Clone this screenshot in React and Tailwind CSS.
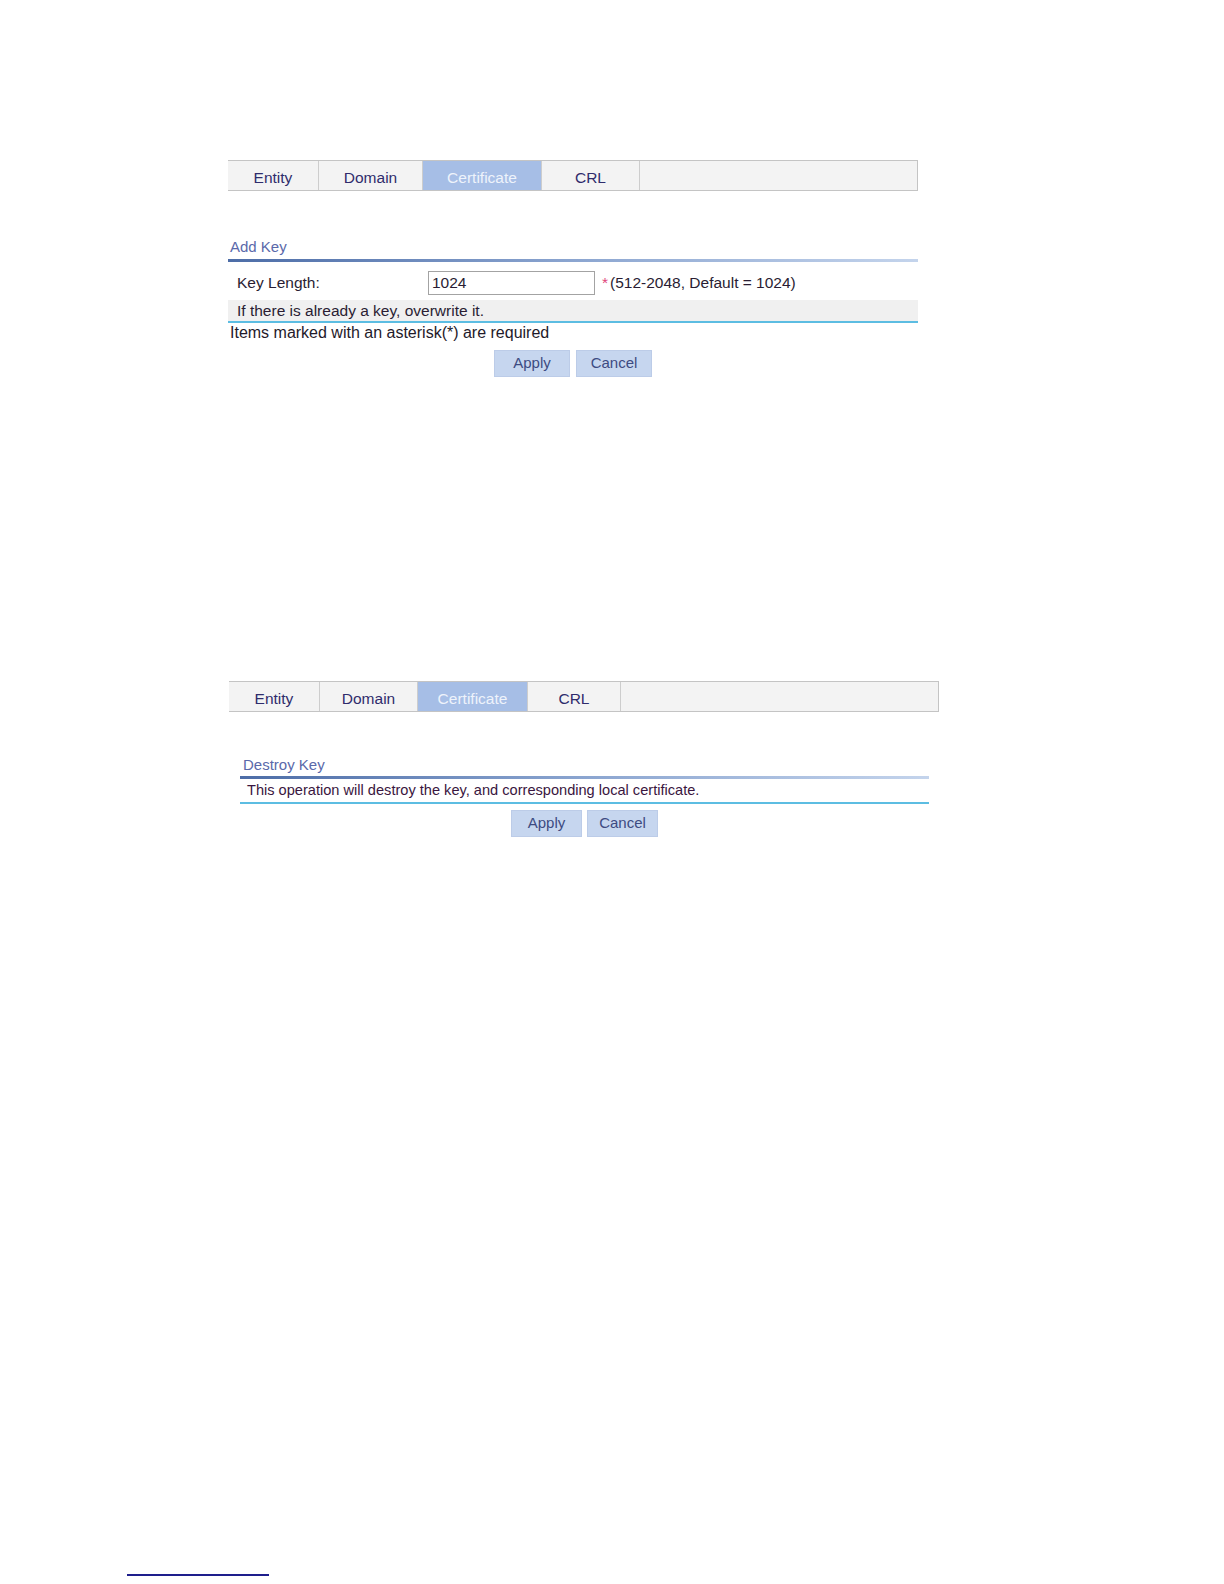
const tabsTop = [
  { label: 'Entity', w: 'w-[91px]' },
  { label: 'Domain', w: 'w-[104px]' },
  { label: 'Certificate', w: 'w-[119px]', active: true },
  { label: 'CRL', w: 'w-[98px]' },
];

const tabsBottom = [
  { label: 'Entity', w: 'w-[91px]' },
  { label: 'Domain', w: 'w-[98px]' },
  { label: 'Certificate', w: 'w-[110px]', active: true },
  { label: 'CRL', w: 'w-[93px]' },
];

const TabBar = ({ tabs, width }) => (
  <div className={`flex h-[31px] ${width} border-t border-b border-r border-[#c4c4c4] bg-[#f3f3f3]`}>
    {tabs.map((tab) => (
      <div
        key={tab.label}
        className={`${tab.w} flex items-center justify-center pt-[4px] border-r border-[#cdcdcd] text-[15.5px] ${
          tab.active ? 'bg-[#a6bee6] text-[#eef3fb]' : 'text-[#2f2c6c]'
        }`}
      >
        {tab.label}
      </div>
    ))}
    <div className="flex-1" />
  </div>
);

const Buttons = ({ w, gap }) => (
  <div className={`flex justify-center ${gap}`}>
    <button className={`${w} h-[27px] bg-[#c6d6ef] border border-[#bccce8] text-[15px] text-[#3d4b82]`}>
      Apply
    </button>
    <button className={`${w} h-[27px] bg-[#c6d6ef] border border-[#bccce8] text-[15px] text-[#3d4b82]`}>
      Cancel
    </button>
  </div>
);

const BlueRule = () => (
  <div className="h-[3px] bg-gradient-to-r from-[#4d6da7] via-[#8ba5d0] to-[#c4d4ec]" />
);

export default function App() {
  return (
    <div
      className="w-[1224px] h-[1584px] bg-white flex flex-col"
      style={{ fontFamily: '"Liberation Sans", Arial, sans-serif' }}
    >
      {/* Add Key */}
      <div className="pt-[160px] pl-[228px]">
        <TabBar tabs={tabsTop} width="w-[690px]" />

        <div className="w-[690px] mt-[46px]">
          <div className="h-[20px] leading-[20px] pl-[2px] text-[15px] text-[#5a69aa]">Add Key</div>
          <div className="mt-[2px]">
            <BlueRule />
          </div>

          <div className="flex items-center h-[38px] pt-[4px] text-[15.5px] text-[#2a1d33]">
            <div className="w-[200px] pl-[9px]">Key Length:</div>
            <input
              className="w-[167px] h-[24px] border border-[#a3a3a3] px-[3px] text-[15.5px] text-[#2a1d33] outline-none"
              defaultValue="1024"
              readOnly
            />
            <span className="ml-[7px] text-[#e0457a]">*</span>
            <span className="ml-[2px]">(512-2048, Default = 1024)</span>
          </div>

          <div className="h-[21px] leading-[21px] bg-[#f0f0f0] pl-[9px] text-[15.5px] text-[#2a1d33]">
            If there is already a key, overwrite it.
          </div>
          <div className="h-[2px] bg-[#5cbde2]" />

          <div className="mt-[1px] h-[18px] leading-[18px] pl-[2px] text-[16px] text-[#1f1a2a]">
            Items marked with an asterisk(*) are required
          </div>

          <div className="mt-[8px]">
            <Buttons w="w-[76px]" gap="gap-[6px]" />
          </div>
        </div>
      </div>

      {/* Destroy Key */}
      <div className="pt-[304px] pl-[229px]">
        <TabBar tabs={tabsBottom} width="w-[710px]" />

        <div className="w-[689px] ml-[11px] mt-[43px]">
          <div className="h-[20px] leading-[20px] pl-[3px] text-[15px] text-[#5a69aa]">Destroy Key</div>
          <div className="mt-[1px]">
            <BlueRule />
          </div>
          <div className="h-[23px] leading-[23px] pl-[7px] text-[14.6px] text-[#3a1640]">
            This operation will destroy the key, and corresponding local certificate.
          </div>
          <div className="h-[2px] bg-[#5cbde2]" />
          <div className="mt-[6px]">
            <Buttons w="w-[71px]" gap="gap-[5px]" />
          </div>
        </div>
      </div>

      {/* footnote rule */}
      <div className="mt-auto mb-[8px] ml-[127px] w-[142px] h-[2px] bg-[#1e1e8c]" />
    </div>
  );
}
